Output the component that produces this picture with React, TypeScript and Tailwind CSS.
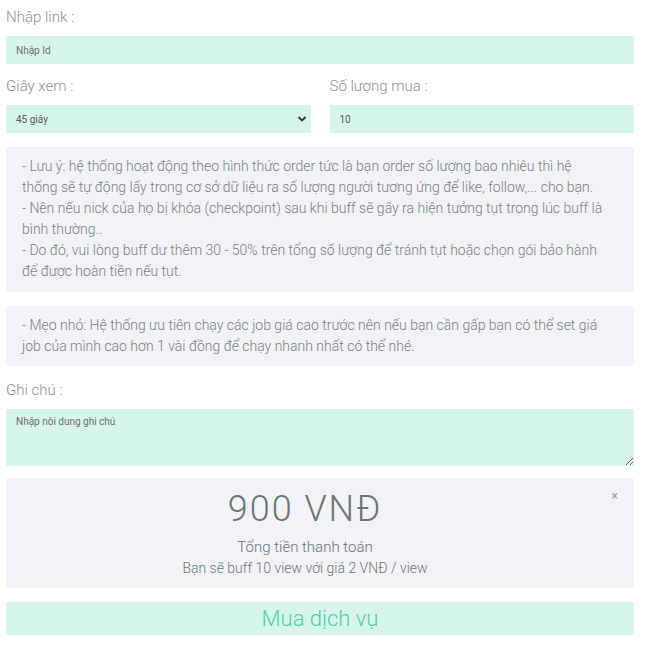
import React, { useState } from "react";

const font = { fontFamily: '"Roboto", "Noto Sans", sans-serif' };

const Label = ({ children }: { children: React.ReactNode }) => (
  <label className="block text-[15px] font-light text-[#8a8f96] leading-[20px] mb-[9px]">
    {children}
  </label>
);

const inputCls =
  "w-full h-[28px] bg-[#d7f5ea] px-[10px] text-[10px] text-[#555] outline-none placeholder:text-[#6b6f75]";

// dòng được ngắt tay cho giống bản gốc
const notes = [
  "- Lưu ý: hệ thống hoạt động theo hình thức order tức là bạn order số lượng bao nhiêu thì hệ",
  "thống sẽ tự động lấy trong cơ sở dữ liệu ra số lượng người tương ứng để like, follow,... cho bạn.",
  "- Nên nếu nick của họ bị khóa (checkpoint) sau khi buff sẽ gây ra hiện tưởng tụt trong lúc buff là",
  "bình thường..",
  "- Do đó, vui lòng buff dư thêm 30 - 50% trên tổng số lượng để tránh tụt hoặc chọn gói bảo hành",
  "để được hoàn tiền nếu tụt.",
];

const tips = [
  "- Mẹo nhỏ: Hệ thống ưu tiên chạy các job giá cao trước nên nếu bạn cần gấp bạn có thể set giá",
  "job của mình cao hơn 1 vài đồng để chạy nhanh nhất có thể nhé.",
];

const App = () => {
  const [link, setLink] = useState("");
  const [seconds, setSeconds] = useState("45");
  const [amount, setAmount] = useState("10");
  const [note, setNote] = useState("");
  const [showTotal, setShowTotal] = useState(true);

  const price = 2;
  const total = Number(amount || 0) * price * 45;

  return (
    <div className="w-[645px] bg-white pl-[6px] pr-[11px] pt-[7px] pb-4" style={font}>
      <div>
        <Label>Nhập link :</Label>
        <input
          className={inputCls}
          placeholder="Nhập Id"
          value={link}
          onChange={(e) => setLink(e.target.value)}
        />
      </div>

      <div className="flex gap-[19px] mt-[12px]">
        <div className="flex-1">
          <Label>Giây xem :</Label>
          <div className="relative">
            <select
              className={inputCls + " appearance-none text-[#444]"}
              value={seconds}
              onChange={(e) => setSeconds(e.target.value)}
            >
              <option value="30">30 giây</option>
              <option value="45">45 giây</option>
              <option value="60">60 giây</option>
            </select>
            <svg
              className="absolute right-[4px] top-[9px] pointer-events-none"
              width="10"
              height="10"
              viewBox="0 0 10 10"
            >
              <path d="M1.5 3 L5 6.5 L8.5 3" fill="none" stroke="#333" strokeWidth="1.8" />
            </svg>
          </div>
        </div>
        <div className="flex-1">
          <Label>Số lượng mua :</Label>
          <input
            className={inputCls + " text-[#444]"}
            value={amount}
            onChange={(e) => setAmount(e.target.value)}
          />
        </div>
      </div>

      <div className="mt-[14px] bg-[#f1f3f6] rounded-[2px] px-[16px] pt-[9px] pb-[10px] text-[14px] font-light leading-[21px] text-[#7a7f86]">
        {notes.map((line, i) => (
          <span key={i} className="block whitespace-nowrap">
            {line}
          </span>
        ))}
      </div>

      <div className="mt-[14px] bg-[#f1f3f6] rounded-[2px] px-[16px] pt-[9px] pb-[9px] text-[14px] font-light leading-[21px] text-[#7a7f86]">
        {tips.map((line, i) => (
          <span key={i} className="block whitespace-nowrap">
            {line}
          </span>
        ))}
      </div>

      <div className="mt-[14px]">
        <Label>Ghi chú :</Label>
        <textarea
          className="block w-full h-[57px] bg-[#d7f5ea] px-[10px] pt-[5px] text-[10px] text-[#555] outline-none placeholder:text-[#6b6f75]"
          placeholder="Nhập nôi dung ghi chú"
          value={note}
          onChange={(e) => setNote(e.target.value)}
        />
      </div>

      {showTotal && (
        <div className="relative mt-[12px] bg-[#f1f3f6] rounded-[2px] h-[110px] flex flex-col items-center pl-[16px] pr-[46px] pt-[9px]">
          <button
            className="absolute right-[16px] top-[12px] text-[12px] text-[#999] leading-none"
            onClick={() => setShowTotal(false)}
          >
            ×
          </button>
          <div className="text-[36px] font-light text-[#6f737a] leading-[44px] tracking-[2px]">
            {total ? 900 : 0} VNĐ
          </div>
          <div className="mt-[6px] text-[15px] font-light text-[#6f737a] leading-[20px]">
            Tổng tiền thanh toán
          </div>
          <div className="mt-[1px] text-[14px] font-light text-[#6f737a] leading-[20px]">
            Bạn sẽ buff {amount || 0} view với giá {price} VNĐ / view
          </div>
        </div>
      )}

      <button className="mt-[14px] w-full h-[33px] bg-[#d7f5ea] text-[22px] font-light text-[#4fcfa6] leading-[33px]">
        Mua dịch vụ
      </button>
    </div>
  );
};

export default App;
